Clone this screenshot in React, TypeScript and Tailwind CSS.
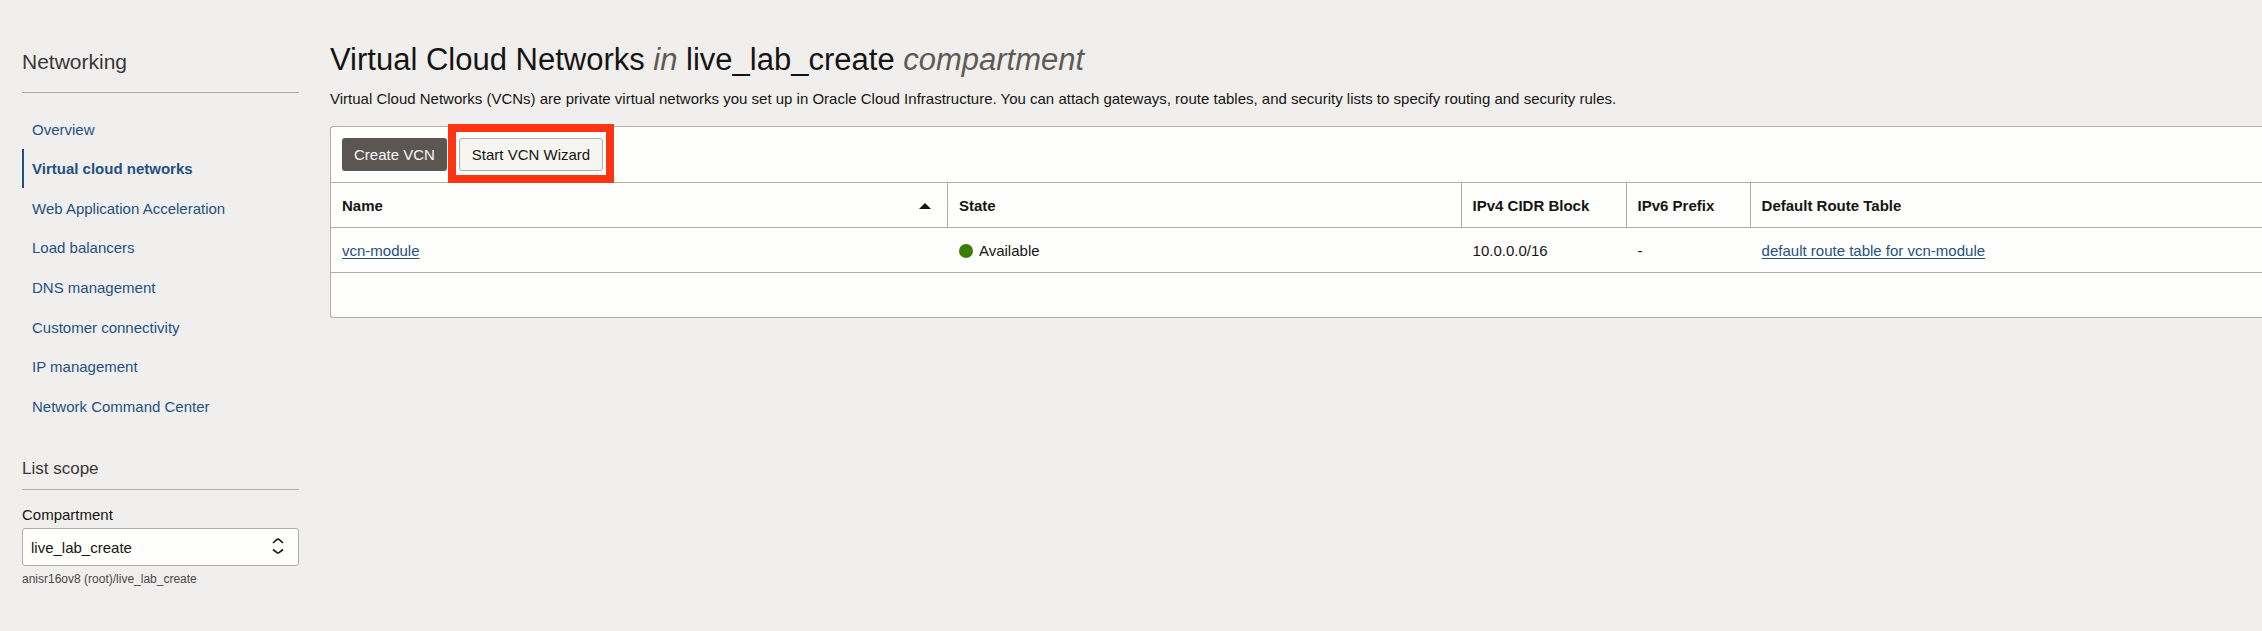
import React from "react";

const navItems = [
  "Overview",
  "Virtual cloud networks",
  "Web Application Acceleration",
  "Load balancers",
  "DNS management",
  "Customer connectivity",
  "IP management",
  "Network Command Center",
];

const activeItem = "Virtual cloud networks";

function Sidebar() {
  return (
    <aside className="w-[277px] shrink-0 pt-12">
      <h2 className="border-b border-[#b0aca0] pb-4 text-[21px] leading-[28px] text-[#3a3836]">
        Networking
      </h2>
      <nav aria-label="Networking" className="mt-4">
        <ul className="flex h-[317px] flex-col">
          {navItems.map((item) => (
            <li key={item} className="flex flex-1">
              <a
                href="#"
                aria-current={item === activeItem ? "page" : undefined}
                className={
                  item === activeItem
                    ? "flex flex-1 items-center border-l-2 border-[#1f5182] pt-0.5 pl-2 text-[15px] font-bold text-[#1f5182]"
                    : "flex flex-1 items-center border-l-2 border-transparent pt-0.5 pl-2 text-[15px] text-[#1f5182]"
                }
              >
                {item}
              </a>
            </li>
          ))}
        </ul>
      </nav>
      <h3 className="mt-[31px] border-b border-[#b0aeab] pb-2 text-[17px] leading-[24px] text-[#3a3836]">
        List scope
      </h3>
      <label htmlFor="compartment" className="mt-[15px] block text-[15px] leading-[20px]">
        Compartment
      </label>
      <div className="relative mt-[3px]">
        <select
          id="compartment"
          defaultValue="live_lab_create"
          className="h-[38px] w-full appearance-none rounded-[3px] border border-[#b0aca6] bg-[#fefefc] pt-0.5 pr-10 pl-2 text-[15px]"
        >
          <option>live_lab_create</option>
        </select>
        <svg
          aria-hidden="true"
          viewBox="0 0 12 16"
          className="pointer-events-none absolute top-[10px] right-[15px] h-4 w-3 fill-none stroke-[#161513] stroke-[1.6]"
        >
          <path d="M1 5 L5 1.5 Q6 0.8 7 1.5 L11 5 M1 11.5 L5 14.6 Q6 15.3 7 14.6 L11 11.5" />
        </svg>
      </div>
      <p className="mt-[5px] text-[12px] leading-[16px] text-[#4a4845]">
        anisr16ov8 (root)/live_lab_create
      </p>
    </aside>
  );
}

function Toolbar() {
  return (
    <div className="flex h-[55px] items-center pl-[11px]">
      <button
        type="button"
        className="h-[33px] rounded-[3px] bg-[#5b5652] px-3 pt-0.5 text-[15px] text-[#fbf9f8]"
      >
        Create VCN
      </button>
      <div className="relative ml-3">
        <button
          type="button"
          className="h-[33px] rounded-[3px] border border-[#b0aca6] bg-[#f5f5f1] px-3 pt-0.5 text-[15px]"
        >
          Start VCN Wizard
        </button>
        <div className="pointer-events-none absolute -inset-x-[11px] -top-[14px] -bottom-[12px] border-8 border-[#fd3412]" />
      </div>
    </div>
  );
}

function NetworksTable() {
  const head = "border-r border-[#b0aca6] px-[11px] pt-0.5 text-left font-bold";
  const cell = "px-[11px] pt-0.5";
  return (
    <table className="w-full table-fixed border-separate border-spacing-0 border-t border-[#b0aca6] text-[15px]">
      <colgroup>
        <col className="w-[31.95%]" />
        <col className="w-[26.6%]" />
        <col className="w-[165px]" />
        <col className="w-[124px]" />
        <col />
      </colgroup>
      <thead>
        <tr className="h-[44px]">
          <th scope="col" aria-sort="ascending" className={head}>
            <span className="flex items-center justify-between pr-[5px]">
              Name
              <svg aria-hidden="true" viewBox="0 0 12 6" className="h-[6px] w-3 fill-[#161513]">
                <path d="M0 6 L6 0 L12 6 Z" />
              </svg>
            </span>
          </th>
          <th scope="col" className={head}>State</th>
          <th scope="col" className={head}>IPv4 CIDR Block</th>
          <th scope="col" className={head}>IPv6 Prefix</th>
          <th scope="col" className="px-[11px] pt-0.5 text-left font-bold">Default Route Table</th>
        </tr>
      </thead>
      <tbody>
        <tr className="h-[46px] [&>td]:border-y [&>td]:border-[#b0aca6]">
          <td className={cell}>
            <a href="#" className="text-[#1f5182] underline underline-offset-2">vcn-module</a>
          </td>
          <td className={cell}>
            <span className="flex items-center gap-[6px]">
              <span className="size-[14px] rounded-full bg-[#3a7d00]" />
              Available
            </span>
          </td>
          <td className={cell}>10.0.0.0/16</td>
          <td className={cell}>-</td>
          <td className={cell}>
            <a href="#" className="text-[#1f5182] underline underline-offset-2">
              default route table for vcn-module
            </a>
          </td>
        </tr>
      </tbody>
    </table>
  );
}

export default function App() {
  return (
    <div className="flex min-h-screen gap-[31px] overflow-hidden bg-[#f1efee] pl-[22px] font-['Liberation_Sans',Arial,sans-serif] text-[#161513]">
      <Sidebar />
      <main className="min-w-0 flex-1 pt-10">
        <h1 className="text-[31px] leading-[40px]">
          Virtual Cloud Networks <em className="text-[#5f5a55]">in</em> live_lab_create{" "}
          <em className="text-[#5f5a55]">compartment</em>
        </h1>
        <p className="mt-[9px] text-[15px] leading-[20px]">
          Virtual Cloud Networks (VCNs) are private virtual networks you set up in Oracle Cloud
          Infrastructure. You can attach gateways, route tables, and security lists to specify
          routing and security rules.
        </p>
        <section
          aria-label="Virtual Cloud Networks"
          className="mt-[17px] rounded-l-[3px] border-y border-l border-[#b0aca6] bg-[#fefefc]"
        >
          <Toolbar />
          <NetworksTable />
          <div className="h-11" />
        </section>
      </main>
    </div>
  );
}
